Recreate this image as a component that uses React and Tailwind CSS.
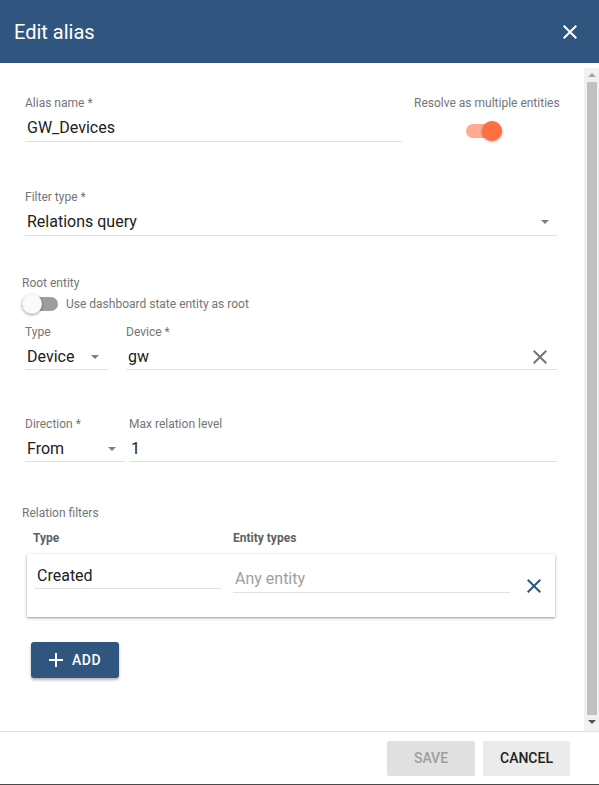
import React from "react";

const Close = ({ className, color = "currentColor" }) => (
  <svg viewBox="0 0 24 24" className={className} fill={color}>
    <path d="M19 6.41L17.59 5 12 10.59 6.41 5 5 6.41 10.59 12 5 17.59 6.41 19 12 13.41 17.59 19 19 17.59 13.41 12z" />
  </svg>
);

const Arrow = () => (
  <span className="block w-0 h-0 border-l-[4px] border-r-[4px] border-t-[4px] border-l-transparent border-r-transparent border-t-[#7d7d7d]" />
);

const Label = ({ children, className = "" }) => (
  <div className={"text-[12px] leading-4 h-4 text-[#757575] whitespace-nowrap " + className}>{children}</div>
);

const Field = ({ label, value, className = "", pb = "pb-[1px]", right = null, placeholder = false }) => (
  <div className={"flex flex-col " + className}>
    <Label>{label}</Label>
    <div className={"mt-[5px] flex items-center border-b border-[#e0e0e0] " + pb}>
      <div className={"flex-1 text-[16px] leading-6 h-6 pl-[2px] " + (placeholder ? "text-[#9e9e9e]" : "text-[#212121]")}>{value}</div>
      {right}
    </div>
  </div>
);

export default function App() {
  return (
    <div className="w-[599px] h-[785px] bg-white flex flex-col overflow-hidden border-b border-[#4a4a4a]" style={{ fontFamily: "Roboto, 'Noto Sans', sans-serif" }}>
      {/* Header */}
      <div className="h-[63px] bg-[#305680] flex items-center justify-between pl-[14px] pr-[17px] shrink-0">
        <div className="text-white text-[20px] leading-6">Edit alias</div>
        <Close className="w-6 h-6" color="#ffffff" />
      </div>

      {/* Content */}
      <div className="h-[668px] flex shrink-0">
        <div className="flex-1 pt-[32px] pl-[25px] pr-[27px] flex flex-col">
          {/* Row 1 */}
          <div className="flex -mr-[2px]">
            <Field label="Alias name *" value="GW_Devices" className="w-[377px]" />
            <div className="ml-[12px] w-[145px] flex flex-col">
              <Label>Resolve as multiple entities</Label>
              <div className="mt-[10px] flex justify-center pr-[5px]">
                <div className="relative w-[36px] h-[20px] flex items-center">
                  <div className="w-[36px] h-[14px] rounded-full bg-[#ffab91]" />
                  <div className="absolute left-[16px] top-0 w-[20px] h-[20px] rounded-full bg-[#ff6e40] shadow-[0_1px_3px_rgba(0,0,0,0.35)]" />
                </div>
              </div>
            </div>
          </div>

          {/* Filter type */}
          <Field
            label="Filter type *"
            value="Relations query"
            className="mt-[47px]"
            right={<div className="mr-[8px]"><Arrow /></div>}
          />

          {/* Root entity */}
          <Label className="mt-[39px] -ml-[3px]">Root entity</Label>
          <div className="mt-[3px] -ml-[3px] flex items-center h-[20px]">
            <div className="relative w-[36px] h-[20px] flex items-center">
              <div className="w-[36px] h-[14px] rounded-full bg-[#9e9e9e]" />
              <div className="absolute left-0 top-0 w-[20px] h-[20px] rounded-full bg-[#fafafa] shadow-[0_1px_3px_rgba(0,0,0,0.4)]" />
            </div>
            <div className="ml-[8px] text-[12px] text-[#757575]">Use dashboard state entity as root</div>
          </div>

          {/* Type / Device */}
          <div className="mt-[10px] flex">
            <Field
              label="Type"
              value="Device"
              className="w-[83px]"
              pb="pb-0"
              right={<div className="mr-[9px]"><Arrow /></div>}
            />
            <Field
              label="Device *"
              value="gw"
              className="ml-[18px] flex-1"
              pb="pb-0"
              right={<Close className="w-6 h-6 mr-[5px]" color="#757575" />}
            />
          </div>

          {/* Direction / Max */}
          <div className="mt-[46px] flex">
            <Field
              label="Direction *"
              value="From"
              className="w-[100px]"
              pb="pb-0"
              right={<div className="mr-[9px]"><Arrow /></div>}
            />
            <Field label="Max relation level" value="1" className="ml-[4px] flex-1" pb="pb-0" />
          </div>

          {/* Relation filters */}
          <Label className="mt-[43px] -ml-[3px]">Relation filters</Label>
          <div className="mt-[9px] flex h-4 text-[12px] leading-4 font-bold text-[#616161]">
            <div className="ml-[8px] w-[200px]">Type</div>
            <div>Entity types</div>
          </div>

          <div className="mt-[8px] ml-[2px] w-[528px] h-[63px] bg-white shadow-[0_1px_3px_rgba(0,0,0,0.3),0_1px_1px_rgba(0,0,0,0.12)] flex items-start pl-[8px]">
            <div className="mt-[10px] w-[186px] border-b border-[#e0e0e0]">
              <div className="text-[16px] leading-6 h-6 text-[#212121] pl-[2px]">Created</div>
            </div>
            <div className="mt-[13px] ml-[12px] w-[277px] border-b border-[#e0e0e0] pb-[1px]">
              <div className="text-[16px] leading-6 h-6 text-[#9e9e9e] pl-[2px]">Any entity</div>
            </div>
            <Close className="mt-[20px] ml-[12px] w-6 h-6" color="#305680" />
          </div>

          <button className="mt-[25px] ml-[6px] w-[88px] h-[36px] rounded-[3px] bg-[#305680] text-white flex items-center justify-center shadow-[0_2px_3px_rgba(0,0,0,0.3)]">
            <svg viewBox="0 0 24 24" className="w-6 h-6 -ml-[5px]" fill="#ffffff">
              <path d="M19 13h-6v6h-2v-6H5v-2h6V5h2v6h6v2z" />
            </svg>
            <span className="ml-[4px] text-[14px] font-medium tracking-[0.5px]">ADD</span>
          </button>
        </div>

        {/* Scrollbar */}
        <div className="w-[15px] mt-[5px] bg-[#f1f1f1] flex flex-col items-center">
          <div className="h-[14px] flex items-center justify-center">
            <span className="block w-0 h-0 border-l-[4px] border-r-[4px] border-b-[4px] border-l-transparent border-r-transparent border-b-[#a3a3a3]" />
          </div>
          <div className="w-[10px] h-[633px] bg-[#c1c1c1]" />
          <div className="h-[14px] flex items-center justify-center">
            <span className="block w-0 h-0 border-l-[4px] border-r-[4px] border-t-[4px] border-l-transparent border-r-transparent border-t-[#505050]" />
          </div>
        </div>
      </div>

      {/* Footer */}
      <div className="flex-1 border-t border-[#e0e0e0] flex items-start justify-end pr-[29px] pt-[9px] gap-[8px]">
        <button className="w-[88px] h-[35px] rounded-[2px] bg-[#e0e0e0] text-[#9e9e9e] text-[14px] font-medium">SAVE</button>
        <button className="w-[87px] h-[35px] rounded-[2px] bg-[#ebebeb] text-[#212121] text-[14px] font-medium">CANCEL</button>
      </div>
    </div>
  );
}
